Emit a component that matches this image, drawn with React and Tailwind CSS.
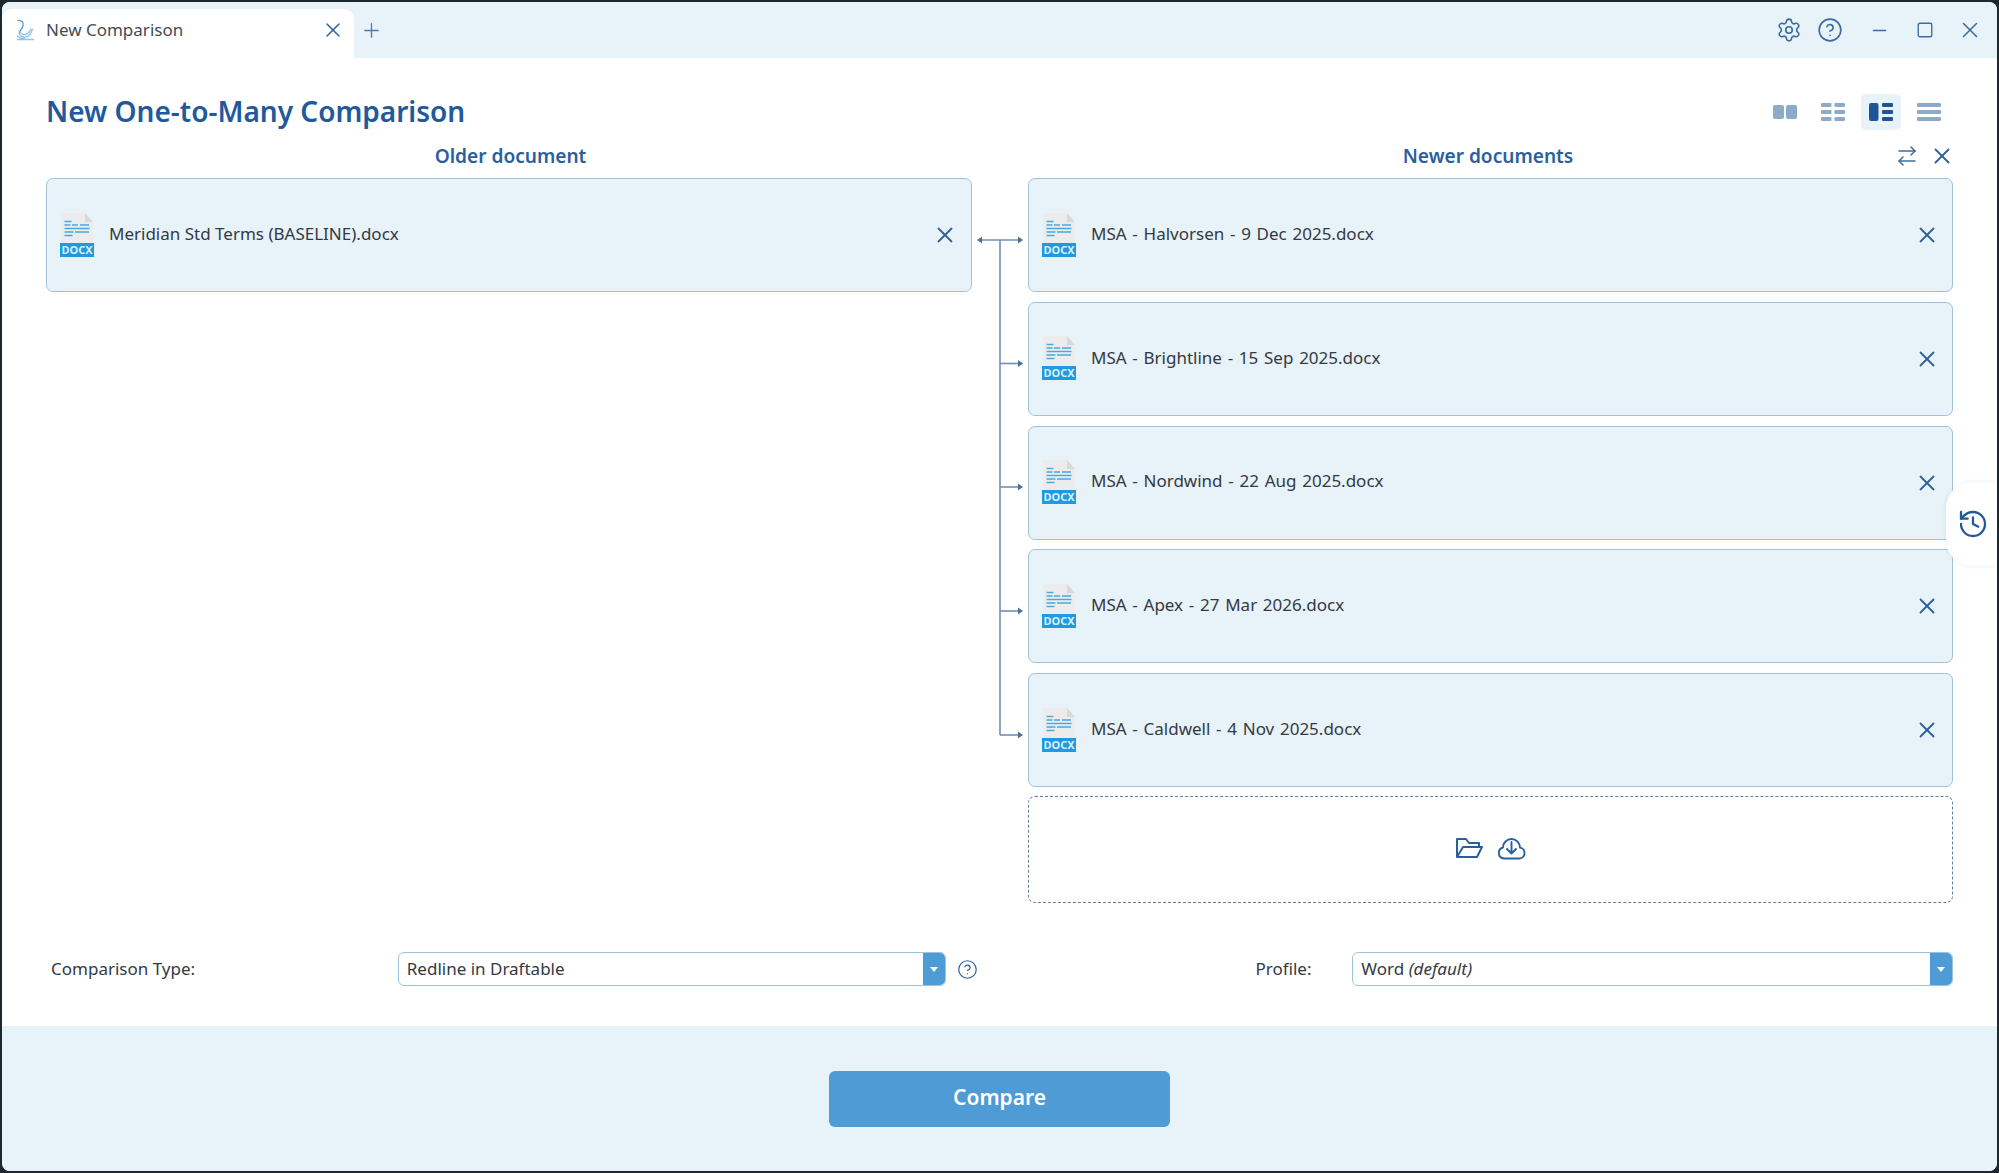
import React from "react";
import { Settings, CircleHelp, Minus, Square, X, Plus, ArrowRightLeft, History } from "lucide-react";

const FONT = "font-['Noto_Sans','Open_Sans',sans-serif]";

function Logo() {
  return (
    <svg width="20" height="22" viewBox="0 0 20 22" fill="none" stroke="#8fc3ea" strokeWidth="1.3" strokeLinecap="round">
      <path d="M2 1.5c4-.5 6 2 5 5.5-.7 2.6-2.6 4-3.6 6.5" stroke="#4f9bd5" />
      <path d="M3 14c1 3 3 4.5 6 4.2 3.500-.4 6-3.600 7.500-8" />
      <path d="M3 11.500c1.500 3 3.500 4.300 6 4 2.600-.4 4.600-2.500 6-5.500" />
      <path d="M1.500 20.500h16" />
      <path d="M1.500 17c2 2 4 2.800 7 2.800" />
    </svg>
  );
}

function DocIcon() {
  return (
    <svg width="34" height="45" viewBox="0 0 34 45" className="shrink-0">
      <path d="M1 0h24l8 9v21H1z" fill="#ececec" />
      <path d="M25 0l8 9h-8z" fill="#d9d9d9" />
      <g fill="none" stroke="#45a9e2" strokeWidth="1.400">
        <path d="M4.500 8.500h7" />
        <path d="M4.500 12h6M12 12h6M20 12h9" />
        <path d="M4.500 15.500h25" />
        <path d="M4.500 19h9M15 19h14" />
        <path d="M4.500 22.500h8" />
      </g>
      <rect x="0" y="30" width="34" height="14" fill="#1f9ae0" />
      <text x="17" y="41" textAnchor="middle" fontSize="11" fontWeight="700" fill="#d8eefb" fontFamily="Noto Sans, sans-serif">DOCX</text>
    </svg>
  );
}

function FileCard({ name, xPad, textClass }) {
  return (
    <div className={`flex h-[114px] items-center rounded-[7px] border border-[#9fc2dd] bg-[#e7f2f9] pl-[13px] ${xPad}`}>
      <DocIcon />
      <span className={`ml-[15px] flex-1 pb-[3px] text-[17px] text-[#333a42] ${textClass}`}>{name}</span>
      <X size={26} strokeWidth={1.7} color="#2f6299" />
    </div>
  );
}

function Connector() {
  const ys = [62, 185.5, 309, 433, 557];
  return (
    <svg width="56" height="725" viewBox="0 0 56 725" fill="none">
      <path d="M28 62V557" stroke="#6f8fb3" strokeWidth="1.600" />
      {ys.map((y, i) => (
        <g key={y}>
          <path d={`M${i === 0 ? 7 : 28} ${y}H50`} stroke="#6f8fb3" strokeWidth="1.600" />
          <path d={`M51 ${y}l-5-3.500v7z`} fill="#4f7097" />
        </g>
      ))}
      <path d="M5 62l5-3.500v7z" fill="#4f7097" />
    </svg>
  );
}

function Select({ width, children }) {
  return (
    <div className={`flex h-[34px] ${width} overflow-hidden rounded-[6px] border border-[#9fc2dd] bg-white`}>
      <div className="flex-1 truncate pl-[8px] text-[17px] leading-[32px] text-[#333a42]">{children}</div>
      <div className="flex w-[22px] items-center justify-center bg-[#4f9bd5]">
        <div className="h-0 w-0 border-x-[4.500px] border-t-[5px] border-x-transparent border-t-white" />
      </div>
    </div>
  );
}

function FolderIcon() {
  return (
    <svg width="29" height="22" viewBox="0 0 29 22" fill="none" stroke="#2a5f9e" strokeWidth="2" strokeLinejoin="round">
      <path d="M2 20V2h9l3 4h10v4" />
      <path d="M2 20h20l5-10H8z" />
    </svg>
  );
}

function CloudIcon() {
  return (
    <svg width="31" height="23" viewBox="0 0 31 23" fill="none" stroke="#2a5f9e" strokeWidth="1.900" strokeLinecap="round" strokeLinejoin="round">
      <path d="M8 21.500h15.500a5.500 5.500 0 0 0 .5-10.900A8.500 8.500 0 0 0 7 10.500 5.600 5.600 0 0 0 8 21.500z" />
      <path d="M15.500 5v11M11 12l4.500 4.500L20 12" />
    </svg>
  );
}

function ViewIcons() {
  const c = "#8eaacb";
  const a = "#1f5596";
  return (
    <div className="flex items-center">
      <div className="flex h-[36px] w-[48px] items-center justify-center">
        <svg width="24" height="14" viewBox="0 0 24 14" fill={c}>
          <rect width="11" height="14" rx="2" />
          <rect x="13" width="11" height="14" rx="2" />
        </svg>
      </div>
      <div className="flex h-[36px] w-[48px] items-center justify-center">
        <svg width="24" height="18" viewBox="0 0 24 18" fill={c}>
          {[0, 7, 14].map((y) => (
            <g key={y}>
              <rect y={y} width="10.500" height="4" rx="1" />
              <rect x="13.500" y={y} width="10.500" height="4" rx="1" />
            </g>
          ))}
        </svg>
      </div>
      <div className="flex h-[36px] w-[48px] justify-center">
        <div className="flex h-[36px] w-[40px] items-center justify-center rounded-[5px] bg-[#e8f2f9]">
          <svg width="24" height="18" viewBox="0 0 24 18" fill={a}>
            <rect width="9.500" height="18" rx="2" />
            {[0, 7, 14].map((y) => (
              <rect key={y} x="13" y={y} width="11" height="4" rx="1" />
            ))}
          </svg>
        </div>
      </div>
      <div className="flex h-[36px] w-[48px] items-center justify-center">
        <svg width="24" height="18" viewBox="0 0 24 18" fill={c}>
          {[0, 7, 14].map((y) => (
            <rect key={y} y={y} width="24" height="4" rx="1" />
          ))}
        </svg>
      </div>
    </div>
  );
}

const newer = [
  "MSA - Halvorsen - 9 Dec 2025.docx",
  "MSA - Brightline - 15 Sep 2025.docx",
  "MSA - Nordwind - 22 Aug 2025.docx",
  "MSA - Apex - 27 Mar 2026.docx",
  "MSA - Caldwell - 4 Nov 2025.docx",
];

export default function App() {
  return (
    <div className={`h-[1173px] w-[1999px] overflow-hidden bg-[#1e2730] p-[2px] ${FONT}`}>
      <div className="relative flex h-full flex-col overflow-hidden rounded-[8px] bg-white">
        {/* Tab bar */}
        <div className="flex h-[56px] shrink-0 items-center bg-[#e7f2f9]">
          <div className="flex h-[49px] w-[352px] items-center self-end rounded-t-[10px] bg-white pb-[7px] pl-[14px] pr-[9px]">
            <Logo />
            <span className="ml-[10px] flex-1 text-[17px] text-[#454c54]">New Comparison</span>
            <X size={24} strokeWidth={1.5} color="#2f6299" />
          </div>
          <div className="ml-[6px]">
            <Plus size={23} strokeWidth={1.4} color="#4a7fb5" />
          </div>
          <div className="flex-1" />
          <Settings size={26} strokeWidth={1.5} color="#3c6c9f" />
          <CircleHelp size={26} strokeWidth={1.500} color="#3c6c9f" className="ml-[15px]" />
          <Minus size={21} strokeWidth={1.500} color="#3c6c9f" className="ml-[26px]" />
          <Square size={18} strokeWidth={1.800} color="#3c6c9f" className="ml-[26px]" />
          <X size={26} strokeWidth={1.500} color="#3c6c9f" className="ml-[23px] mr-[14px]" />
        </div>

        {/* Main */}
        <div className="flex flex-1 flex-col pl-[44px] pr-[44px]">
          <div className="mt-[34px] flex h-[40px] items-center justify-between">
            <h1 className="pb-[3px] text-[28px] font-semibold leading-none text-[#22599c]">New One-to-Many Comparison</h1>
            <ViewIcons />
          </div>

          <div className="grid grid-cols-[926px_56px_925px]">
            <div className="flex h-[46px] items-center justify-center pl-[3px] pt-[2px] text-[19.100px] font-semibold text-[#2a5f9e]">Older document</div>
            <div />
            <div className="relative flex h-[46px] items-center justify-center pr-[5px] pt-[2px] text-[19.100px] font-semibold text-[#2a5f9e]">
              Newer documents
              <div className="absolute -right-[2px] top-[11px] flex h-[26px] items-center gap-[10px]">
                <ArrowRightLeft size={24} strokeWidth={1.500} color="#3c6c9f" />
                <X size={26} strokeWidth={1.700} color="#2f6299" />
              </div>
            </div>

            <div>
              <FileCard name="Meridian Std Terms (BASELINE).docx" xPad="pr-[13px]" textClass="" />
            </div>
            <Connector />
            <div className="flex flex-col gap-[9.750px]">
              {newer.map((n) => (
                <FileCard key={n} name={n} xPad="pr-[12px]" textClass="[word-spacing:1.300px]" />
              ))}
              <div className="-mt-[1px] flex h-[107px] items-center justify-center gap-[12px] rounded-[7px] border border-dashed border-[#5f7f9f] pb-[2px]">
                <FolderIcon />
                <CloudIcon />
              </div>
            </div>
          </div>

          <div className="mt-[49px] flex items-center pl-[5px]">
            <div className="w-[347px] text-[17px] text-[#333a42]">Comparison Type:</div>
            <Select width="w-[549px]">Redline in Draftable</Select>
            <CircleHelp size={21} strokeWidth={1.400} color="#2f6299" className="ml-[11px]" />
            <div className="ml-[277px] w-[97px] text-[17px] text-[#333a42]">Profile:</div>
            <Select width="w-[601px]">
              Word <em>(default)</em>
            </Select>
          </div>
        </div>

        {/* Footer */}
        <div className="flex h-[145px] shrink-0 items-center justify-center bg-[#e7f2f9]">
          <button className="h-[56px] w-[341px] rounded-[6px] bg-[#4f9bd5] pb-[1px] text-[21px] font-semibold text-white">Compare</button>
        </div>

        {/* History flyout */}
        <div className="absolute right-0 top-[480px] flex h-[84px] w-[51px] items-center justify-center rounded-l-[26px] bg-white pl-[3px] shadow-[0_0_4px_rgba(60,100,140,0.12)]">
          <History size={32} strokeWidth={1.7} color="#22599c" />
        </div>
      </div>
    </div>
  );
}
